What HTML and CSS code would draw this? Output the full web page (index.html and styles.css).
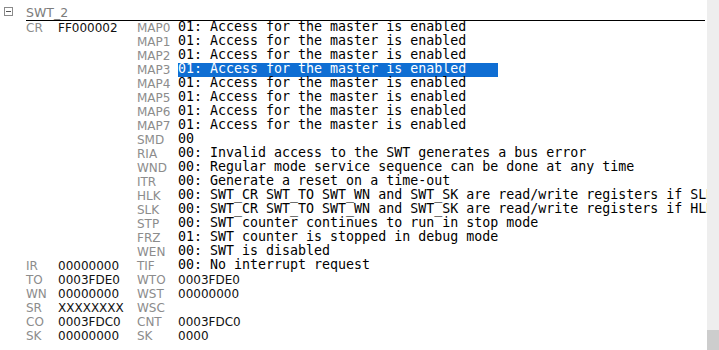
FILE: index.html
```html
<!DOCTYPE html>
<html>
<head>
<meta charset="utf-8">
<link rel="stylesheet" href="styles.css">
</head>
<body>
<div class="window">
  <div class="view">
    <div class="title-row">
      <div class="toggle">
        <svg width="9" height="9" viewBox="0 0 9 9"><rect x="0.5" y="0.5" width="8" height="8" fill="#fff" stroke="#8a8a8a"/><line x1="2" y1="4.5" x2="7" y2="4.5" stroke="#555"/></svg>
      </div>
      <div class="title">SWT_2</div>
    </div>
    <div class="rows">
      <div class="row"><span class="lbl">CR</span><span class="val">FF000002</span><span class="lbl">MAP0</span><span class="desc">01: Access for the master is enabled</span></div>
      <div class="row"><span></span><span></span><span class="lbl">MAP1</span><span class="desc">01: Access for the master is enabled</span></div>
      <div class="row"><span></span><span></span><span class="lbl">MAP2</span><span class="desc">01: Access for the master is enabled</span></div>
      <div class="row"><span></span><span></span><span class="lbl">MAP3</span><span class="desc"><span class="sel">01: Access for the master is enabled</span></span></div>
      <div class="row"><span></span><span></span><span class="lbl">MAP4</span><span class="desc">01: Access for the master is enabled</span></div>
      <div class="row"><span></span><span></span><span class="lbl">MAP5</span><span class="desc">01: Access for the master is enabled</span></div>
      <div class="row"><span></span><span></span><span class="lbl">MAP6</span><span class="desc">01: Access for the master is enabled</span></div>
      <div class="row"><span></span><span></span><span class="lbl">MAP7</span><span class="desc">01: Access for the master is enabled</span></div>
      <div class="row"><span></span><span></span><span class="lbl">SMD</span><span class="desc">00</span></div>
      <div class="row"><span></span><span></span><span class="lbl">RIA</span><span class="desc">00: Invalid access to the SWT generates a bus error</span></div>
      <div class="row"><span></span><span></span><span class="lbl">WND</span><span class="desc">00: Regular mode service sequence can be done at any time</span></div>
      <div class="row"><span></span><span></span><span class="lbl">ITR</span><span class="desc">00: Generate a reset on a time-out</span></div>
      <div class="row"><span></span><span></span><span class="lbl">HLK</span><span class="desc">00: SWT_CR SWT_TO SWT_WN and SWT_SK are read/write registers if SLK=0</span></div>
      <div class="row"><span></span><span></span><span class="lbl">SLK</span><span class="desc">00: SWT_CR SWT_TO SWT_WN and SWT_SK are read/write registers if HLK=0</span></div>
      <div class="row"><span></span><span></span><span class="lbl">STP</span><span class="desc">00: SWT counter continues to run in stop mode</span></div>
      <div class="row"><span></span><span></span><span class="lbl">FRZ</span><span class="desc">01: SWT counter is stopped in debug mode</span></div>
      <div class="row"><span></span><span></span><span class="lbl">WEN</span><span class="desc">00: SWT is disabled</span></div>
      <div class="row"><span class="lbl">IR</span><span class="val">00000000</span><span class="lbl">TIF</span><span class="desc">00: No interrupt request</span></div>
      <div class="row"><span class="lbl">TO</span><span class="val">0003FDE0</span><span class="lbl">WTO</span><span class="val">0003FDE0</span></div>
      <div class="row"><span class="lbl">WN</span><span class="val">00000000</span><span class="lbl">WST</span><span class="val">00000000</span></div>
      <div class="row"><span class="lbl">SR</span><span class="val">XXXXXXXX</span><span class="lbl">WSC</span><span class="val"></span></div>
      <div class="row"><span class="lbl">CO</span><span class="val">0003FDC0</span><span class="lbl">CNT</span><span class="val">0003FDC0</span></div>
      <div class="row"><span class="lbl">SK</span><span class="val">00000000</span><span class="lbl">SK</span><span class="val">0000</span></div>
    </div>
  </div>
  <div class="scrollbar"><div class="thumb"></div></div>
</div>
</body>
</html>
```

FILE: styles.css
```css
html, body {
  margin: 0;
  padding: 0;
  background: #fff;
}

.window {
  display: flex;
  width: 719px;
  height: 350px;
  overflow: hidden;
}

.view {
  flex: 1;
  min-width: 0;
  overflow: hidden;
  font-family: "DejaVu Sans", Verdana, sans-serif;
  font-size: 12px;
}

.title-row {
  display: flex;
  height: 21px;
  margin-right: 2px;
}

.toggle {
  width: 26px;
  flex: none;
  padding: 7px 0 0 4px;
  box-sizing: border-box;
  line-height: 0;
}

.title {
  flex: 1;
  color: #7c7c7c;
  font-size: 12.5px;
  line-height: 14px;
  padding-top: 6px;
  height: 14px;
  border-bottom: 1px solid #000;
}

.rows {
  padding-left: 26px;
}

.row {
  display: grid;
  grid-template-columns: 32px 79px 41px auto;
  height: 14px;
  line-height: 14px;
  white-space: nowrap;
}

.lbl {
  color: #8c8c8c;
}

.val {
  color: #111;
}

.desc {
  font-family: "DejaVu Sans Mono", "Liberation Mono", monospace;
  font-size: 13.3px;
  line-height: 12px;
  color: #000;
}

.sel {
  display: inline-block;
  vertical-align: top;
  width: 320px;
  padding-bottom: 2px;
  background: #0f6ed3;
  color: #fff;
}

.scrollbar {
  width: 12px;
  flex: none;
  background: #eeeeee;
  display: flex;
  flex-direction: column;
  justify-content: flex-end;
}

.thumb {
  height: 20px;
  background: #cdcdcd;
}
```
